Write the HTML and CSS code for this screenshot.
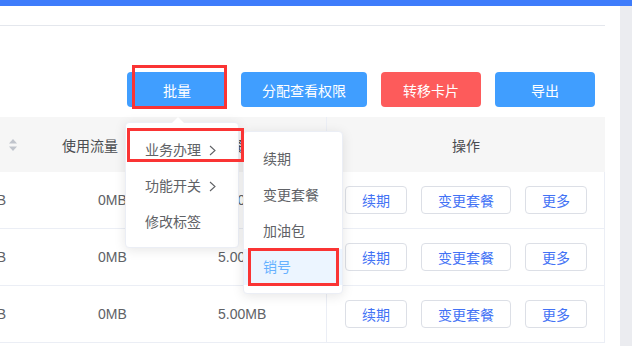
FILE: index.html
```html
<!DOCTYPE html>
<html lang="zh-CN">
<head>
    <meta charset="UTF-8">
    <meta name="viewport" content="width=device-width, initial-scale=1.0">
    <title>卡片管理</title>
    <link rel="stylesheet" href="styles.css">
</head>
<body>
    <div class="topbar"></div>

    <div class="main">
        <div class="content">
            <div class="tabs"></div>

            <!-- 操作按钮 -->
            <div class="toolbar">
                <button class="btn btn-primary btn-batch">批量</button>
                <button class="btn btn-primary btn-wide">分配查看权限</button>
                <button class="btn btn-danger">转移卡片</button>
                <button class="btn btn-primary">导出</button>
            </div>

            <!-- 表格 -->
            <div class="table">
                <div class="row head">
                    <div class="cell cell-a"><span class="sort"><svg width="8" height="12" viewBox="0 0 8 12"><path d="M4 0 L8 4.5 L0 4.5 Z" fill="#c0c4cc"/><path d="M4 12 L8 7.5 L0 7.5 Z" fill="#c0c4cc"/></svg></span></div>
                    <div class="cell cell-b">使用流量</div>
                    <div class="cell cell-c">套餐流量</div>
                    <div class="cell cell-d">操作</div>
                </div>
                <div class="row">
                    <div class="cell cell-a">0MB</div>
                    <div class="cell cell-b">0MB</div>
                    <div class="cell cell-c">5.00MB</div>
                    <div class="cell cell-d">
                        <button class="btn-line">续期</button>
                        <button class="btn-line">变更套餐</button>
                        <button class="btn-line">更多</button>
                    </div>
                </div>
                <div class="row">
                    <div class="cell cell-a">0MB</div>
                    <div class="cell cell-b">0MB</div>
                    <div class="cell cell-c">5.00MB</div>
                    <div class="cell cell-d">
                        <button class="btn-line">续期</button>
                        <button class="btn-line">变更套餐</button>
                        <button class="btn-line">更多</button>
                    </div>
                </div>
                <div class="row">
                    <div class="cell cell-a">0MB</div>
                    <div class="cell cell-b">0MB</div>
                    <div class="cell cell-c">5.00MB</div>
                    <div class="cell cell-d">
                        <button class="btn-line">续期</button>
                        <button class="btn-line">变更套餐</button>
                        <button class="btn-line">更多</button>
                    </div>
                </div>
            </div>
        </div>
        <div class="scroll"></div>
    </div>

    <!-- 批量下拉菜单 -->
    <div class="dropdown menu-batch">
        <span class="arrow"></span>
        <div class="item">业务办理 <svg class="chev" width="7" height="11" viewBox="0 0 7 11"><polyline points="1,1 6,5.5 1,10" fill="none" stroke="#606266" stroke-width="1.1"/></svg></div>
        <div class="item">功能开关 <svg class="chev" width="7" height="11" viewBox="0 0 7 11"><polyline points="1,1 6,5.5 1,10" fill="none" stroke="#606266" stroke-width="1.1"/></svg></div>
        <div class="item">修改标签</div>
    </div>

    <!-- 业务办理子菜单 -->
    <div class="dropdown menu-sub">
        <div class="item">续期</div>
        <div class="item">变更套餐</div>
        <div class="item">加油包</div>
        <div class="item active">销号</div>
    </div>

    <!-- 标注框 -->
    <div class="mark mark-batch"></div>
    <div class="mark mark-business"></div>
    <div class="mark mark-cancel"></div>
</body>
</html>
```

FILE: styles.css
```css
body {
    margin: 0;
    font-family: "Liberation Sans", "Noto Sans CJK SC", sans-serif;
    font-size: 14px;
    color: #606266;
    background-color: #fff;
    height: 346px;
    overflow: hidden;
}
.topbar {
    height: 6px;
    background-color: #3e7cfb;
}
.main {
    display: flex;
    height: 340px;
}
.content {
    width: 605px;
    padding-right: 15px;
    background-color: #fff;
}
.scroll {
    flex: 1;
    background-color: #ebecf0;
}
.tabs {
    height: 19px;
    border-bottom: 1px solid #e4e7ed;
}
.toolbar {
    display: flex;
    justify-content: flex-end;
    gap: 14px;
    padding: 46px 10px 10px 0;
}
.btn {
    width: 100px;
    height: 35px;
    border: none;
    border-radius: 4px;
    color: #fff;
    font-family: inherit;
    font-size: 14px;
    padding: 0;
}
.btn-wide {
    width: 126px;
}
.btn-primary {
    background-color: #409eff;
}
.btn-danger {
    background-color: #fd5b5b;
}
.row {
    display: grid;
    grid-template-columns: 20px 140px 166px 1fr;
    height: 56px;
    border-bottom: 1px solid #ebeef5;
    border-right: 1px solid #ebeef5;
}
.row.head {
    height: 55px;
    border: none;
    background-color: #f6f6f6;
    color: #4a4c50;
}
.cell {
    display: flex;
    align-items: center;
    overflow: hidden;
    white-space: nowrap;
}
.cell-a {
    justify-content: flex-end;
    padding-right: 14px;
}
.head .cell-a {
    padding-right: 3px;
}
.sort {
    display: flex;
}
.cell-b {
    padding-left: 78px;
}
.cell-c {
    padding-left: 58px;
}
.head .cell-b,
.head .cell-c {
    justify-content: center;
    padding-left: 0;
}
.cell-d {
    border-left: 1px solid #ebeef5;
    padding-left: 18px;
    gap: 14px;
}
.head .cell-d {
    justify-content: center;
    padding-left: 0;
}
.btn-line {
    height: 28px;
    padding: 0 16px;
    border: 1px solid #dcdfe6;
    border-radius: 4px;
    background-color: #fff;
    color: #4272f5;
    font-family: inherit;
    font-size: 14px;
}
.dropdown {
    position: absolute;
    background-color: #fff;
    border: 1px solid #ebeef5;
    border-radius: 4px;
    box-shadow: 0 2px 12px rgba(0, 0, 0, 0.1);
    padding: 9px 0 7px;
    box-sizing: border-box;
}
.menu-batch {
    left: 125px;
    top: 122px;
    width: 114px;
}
.menu-sub {
    left: 243px;
    top: 131px;
    width: 100px;
    padding: 9px 0 8px;
}
.arrow {
    position: absolute;
    left: 46px;
    top: -6px;
    width: 0;
    height: 0;
    border-left: 6px solid transparent;
    border-right: 6px solid transparent;
    border-bottom: 6px solid #fff;
}
.item {
    height: 36px;
    line-height: 36px;
    padding-left: 19px;
    display: flex;
    align-items: center;
    white-space: nowrap;
}
.chev {
    margin-left: 8px;
}
.item.active {
    background-color: #ecf5ff;
    color: #66b1ff;
}
.mark {
    position: absolute;
    border: 3px solid #fa3434;
    box-sizing: border-box;
}
.mark-batch {
    left: 132px;
    top: 65px;
    width: 95px;
    height: 44px;
}
.mark-business {
    left: 127px;
    top: 128px;
    width: 117px;
    height: 34px;
}
.mark-cancel {
    left: 248px;
    top: 248px;
    width: 91px;
    height: 38px;
}
```
